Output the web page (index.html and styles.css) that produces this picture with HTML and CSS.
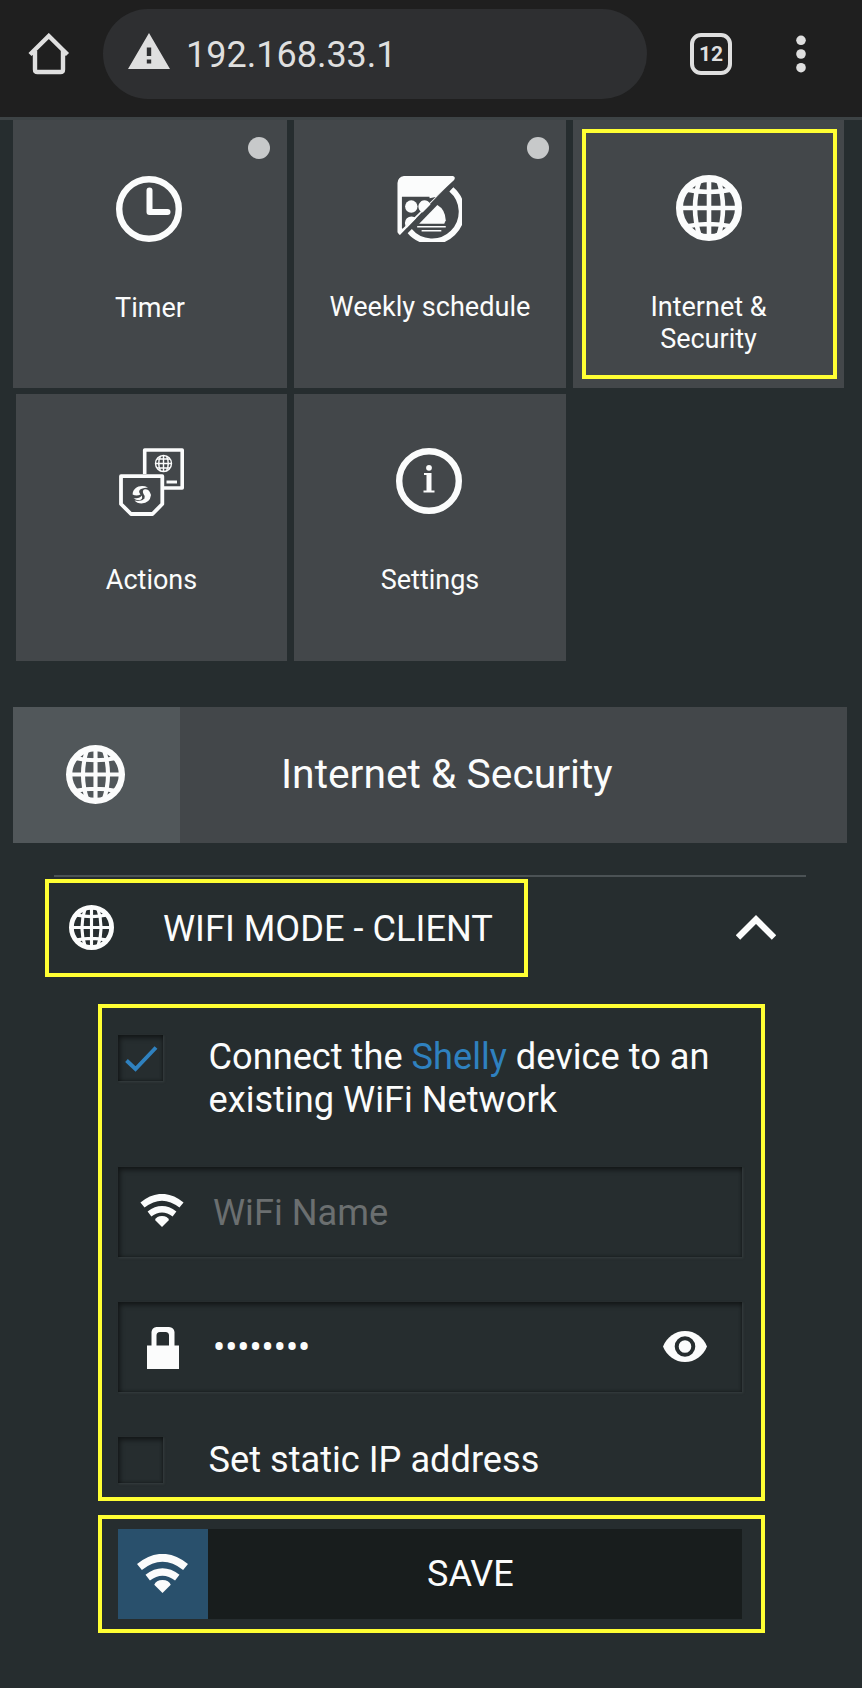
FILE: index.html
```html
<!DOCTYPE html>
<html lang="en">
<head>
<meta charset="utf-8">
<title>Internet &amp; Security</title>
<link rel="stylesheet" href="styles.css">
</head>
<body>
<svg class="defs" aria-hidden="true">
  <symbol id="globe" viewBox="0 0 66 66">
    <g fill="none" stroke="currentColor" stroke-width="4.600">
      <circle cx="33" cy="33" r="29.500" stroke-width="7"/>
      <path d="M33 3v60M3 33h60M10 14.500Q33 19.500 56 14.500M10 51.500Q33 46.500 56 51.500"/>
      <path d="M24 4Q14 33 24 62M42 4Q52 33 42 62"/>
    </g>
  </symbol>
  <symbol id="wifi" viewBox="0 0 44 33">
    <path d="M2.500 11Q22-4.500 41.500 11" fill="none" stroke="currentColor" stroke-width="6.600"/>
    <path d="M9.500 20Q22 10.500 34.500 20" fill="none" stroke="currentColor" stroke-width="6.200"/>
    <path d="M15 26Q16.500 22 22 22T29 26L22 33z" fill="currentColor"/>
  </symbol>
</svg>

<header class="browser">
  <svg class="home" viewBox="0 0 42 42"><path d="M2 21.500 20.800 3 39.500 21.500M7 18v18.500q0 2.500 2.500 2.500h23q2.500 0 2.500-2.500V18" fill="none" stroke="currentColor" stroke-width="4.400"/></svg>
  <div class="address">
    <svg class="warn" viewBox="0 0 42 36"><path d="M21 0 42 36H0zM18.800 14.500v8.500h4.400v-8.500zM18.800 26.500v4h4.400v-4z" fill="currentColor" fill-rule="evenodd"/></svg>
    <span>192.168.33.1</span>
  </div>
  <div class="tabs">12</div>
  <svg class="menu" viewBox="0 0 10 38"><g fill="currentColor"><circle cx="5" cy="5.300" r="4.800"/><circle cx="5" cy="19" r="4.800"/><circle cx="5" cy="32.700" r="4.800"/></g></svg>
</header>

<main>
  <nav class="tiles">
    <div class="row">
      <div class="tile timer">
        <i class="dot"></i>
        <svg class="icon" viewBox="0 0 66 66" fill="none" stroke="currentColor"><circle cx="33" cy="33" r="29.800" stroke-width="6.400"/><path d="M33.500 14.500V36H51.500" stroke-width="6" stroke-linecap="round" stroke-linejoin="round"/></svg>
        <span class="label">Timer</span>
      </div>
      <div class="tile weekly">
        <i class="dot"></i>
        <svg class="icon" viewBox="0 0 67 67">
          <g fill="currentColor">
            <path d="M8 0H57.500Q61 1 59 4L40.500 21H6V53L8 54.500 3.500 60 1.500 57V7Q2 1 8 0z"/>
            <path d="M40.500 21 60 2 4 60 4 56z"/>
            <circle cx="15.500" cy="31" r="6.300"/>
            <path d="M27 37a6.300 6.300 0 1 1 8-8z"/>
            <path d="M11 52.500a6.300 6.300 0 1 1 9.500-9.500z"/>
            <path d="M23.500 48.500 42 29.500Q50 34 50.500 45L49 48.500z"/>
          </g>
          <path d="M56 13.500A30 30 0 1 1 13.500 55.500" fill="none" stroke="currentColor" stroke-width="6"/>
          <path d="M21.500 51.500h29M26 55.500h20" stroke="currentColor" stroke-width="1.500"/>
          <path d="M6.500 61.500 63 4.500" stroke="#43474a" stroke-width="2.800"/>
          <path d="M34 21.500 41 20" stroke="currentColor" stroke-width="2"/>
        </svg>
        <span class="label">Weekly schedule</span>
      </div>
      <div class="tile internet">
        <div class="mark"></div>
        <svg class="icon"><use href="#globe"/></svg>
        <span class="label">Internet &amp;<br>Security</span>
      </div>
    </div>
    <div class="row second">
      <div class="tile actions">
        <svg class="icon" viewBox="0 0 66 68" fill="none" stroke="currentColor">
          <path d="M25.700 26V2H63.200V40H45" stroke-width="3.600" stroke-linejoin="round"/>
          <path d="M2 28.200H43.300V56L33.500 66H12L2 56z" stroke-width="3.800" stroke-linejoin="round"/>
          <path d="M47.500 34h10.500" stroke-width="3"/>
          <g stroke-width="1.400"><circle cx="44.500" cy="15.500" r="8"/><path d="M44.500 7.500v16M36.500 15.500h16M38 11h13M38 20h13M41.500 8Q38 15.500 41.500 23M47.500 8Q51 15.500 47.500 23"/></g>
          <g fill="currentColor" stroke="none"><path d="M29 39.500C22 36 14 39 13.600 46.500Q17.500 48.500 21.500 46.500 18.500 43 22 41 25 39.500 29 39.500z"/><path d="M25 41.500Q29 40.500 31 44.500L32 47Q31 55 22.500 55.500 18 55.500 15.500 52.500 23 54 25.500 50.500 26.500 48 24.500 46 23 43 25 41.500z"/><path d="M14.500 50Q21 51 22.500 47.500 24.500 51 20.500 52.300 17 52.500 14.500 50z"/></g>
        </svg>
        <span class="label">Actions</span>
      </div>
      <div class="tile settings">
        <svg class="icon" viewBox="0 0 66 66"><circle cx="33" cy="33" r="29.800" fill="none" stroke="currentColor" stroke-width="6.400"/><circle cx="33" cy="19.800" r="2.900" fill="currentColor"/><path d="M28 25h7.500v17.500h3V44.500H27.500v-2h3V27H28z" fill="currentColor"/></svg>
        <span class="label">Settings</span>
      </div>
    </div>
  </nav>

  <section class="title">
    <div class="title-icon"><svg><use href="#globe"/></svg></div>
    <h1>Internet &amp; Security</h1>
  </section>

  <hr>

  <div class="mode">
    <div class="mode-name">
      <svg class="mode-icon"><use href="#globe"/></svg>
      <h2>WIFI MODE - CLIENT</h2>
    </div>
    <svg class="chevron" viewBox="0 0 40 25"><path d="M2 22.500 20 4.500 38 22.500" fill="none" stroke="currentColor" stroke-width="6.200"/></svg>
  </div>

  <form class="client">
    <div class="check">
      <div class="box"><svg viewBox="0 0 45 46"><path d="M8.500 25.500 17.500 34 38 12.500" fill="none" stroke="#2f81bf" stroke-width="3.900"/></svg></div>
      <p>Connect the <b>Shelly</b> device to an<br>existing WiFi Network</p>
    </div>
    <div class="field name">
      <svg class="wifi"><use href="#wifi"/></svg>
      <span class="placeholder">WiFi Name</span>
    </div>
    <div class="field password">
      <svg class="lock" viewBox="0 0 32 42"><path d="M0 18.500H4.500V5Q5 .5 9.500 0H22Q27 .5 27.500 5V18.500H32V42H0zM9.500 18.500H22V8.500Q22 5 18.500 5H13Q9.500 5 9.500 8.500z" fill="currentColor" fill-rule="evenodd"/></svg>
      <span class="dots">••••••••</span>
      <svg class="eye" viewBox="0 0 44 31"><path d="M0 15.500C4 6 12 0 22 0S40 6 44 15.500C40 25 32 31 22 31S4 25 0 15.500z" fill="currentColor"/><circle cx="22" cy="15.500" r="8.300" fill="none" stroke="#262d2f" stroke-width="4"/></svg>
    </div>
    <div class="check static">
      <div class="box"></div>
      <p>Set static IP address</p>
    </div>
  </form>

  <div class="submit">
    <div class="save">
      <div class="save-icon"><svg><use href="#wifi"/></svg></div>
      <span>SAVE</span>
    </div>
  </div>
</main>
</body>
</html>
```

FILE: styles.css
```css
* { box-sizing: border-box; }
body {
  margin: 0;
  width: 862px;
  height: 1688px;
  overflow: hidden;
  background: #262d2f;
  color: #fbfcfc;
  font-family: Roboto, sans-serif;
}
svg { display: block; flex: none; }
.defs { position: absolute; width: 0; height: 0; }
h1, h2, p { margin: 0; font-weight: 400; }

.browser {
  display: flex;
  height: 120px;
  background: #1f1f1f;
  border-bottom: 3px solid #3d4345;
  color: #dfdfdf;
}
.home { width: 42px; height: 42px; margin: 33px 0 0 28px; }
.address {
  display: flex;
  width: 544px;
  height: 90px;
  margin: 9px 0 0 33px;
  padding: 0 0 0 25px;
  border-radius: 45px;
  background: #2e2f31;
}
.warn { width: 42px; height: 36px; margin-top: 24px; }
.address span { margin: 25px 0 0 16px; font-size: 36px; line-height: 43px; }
.tabs {
  width: 42px;
  height: 42px;
  margin: 33px 0 0 43px;
  border: 4.500px solid #dfdfdf;
  border-radius: 11px;
  font: 700 21px/35px Roboto, sans-serif;
  text-align: center;
}
.menu { width: 10px; height: 38px; margin: 34.500px 0 0 64px; }

.tiles { display: grid; gap: 6px; padding-left: 13px; }
.row { display: flex; gap: 7px; }
.second { padding-left: 3px; }
.tile {
  position: relative;
  display: flex;
  flex-direction: column;
  align-items: center;
  width: 272px;
  height: 268px;
  padding-top: 56px;
  background: #43474a;
}
.timer { width: 274px; }
.internet { width: 271px; }
.second .tile { height: 267px; padding-top: 54px; }
.second .actions { width: 271px; }
.icon { width: 66px; height: 66px; }
.timer .icon, .weekly .icon, .settings .icon { margin-left: -2px; }
.internet .icon { margin: -1px 0 1px; }
.actions .icon { height: 68px; margin-bottom: -2px; }
.label { margin-top: 50px; font-size: 27px; line-height: 31.500px; text-align: center; }
.timer .label { margin-top: 51px; }
.weekly .label { font-size: 27.100px; }
.second .label { margin-top: 51px; }
.dot {
  position: absolute;
  top: 17px;
  right: 17px;
  width: 22px;
  height: 22px;
  border-radius: 50%;
  background: #c7c9ca;
}
.mark {
  position: absolute;
  inset: 9px 7px 9px 9px;
  border: 4px solid #ffff33;
}

.title {
  display: flex;
  width: 834px;
  height: 136px;
  margin: 46px 0 0 13px;
  background: #43474a;
}
.title-icon { width: 167px; padding: 38px 0 0 53px; background: #51575a; }
.title-icon svg { width: 59px; height: 59px; }
.title h1 { margin: 43px 0 0 101px; font-size: 40.800px; line-height: 48px; }

hr { width: 752px; height: 2px; margin: 32px 0 2px 54px; border: 0; background: #4b5255; }

.mode { display: flex; margin-left: 45px; }
.mode-name {
  display: flex;
  width: 483px;
  height: 98px;
  border: 4px solid #ffff33;
  padding: 22px 0 0 20px;
}
.mode-icon { width: 45px; height: 45px; }
.mode h2 { margin: 2px 0 0 49px; font-size: 36.200px; line-height: 43px; white-space: nowrap; }
.chevron { width: 40px; height: 25px; margin: 36px 0 0 208px; }

.client, .submit { width: 667px; margin-left: 98px; border: 4px solid #ffff33; }
.client { height: 497px; margin-top: 27px; padding: 27px 0 0 16px; font-size: 36px; line-height: 43px; }
.check { display: flex; gap: 45.500px; }
.check p { font-size: 36.200px; white-space: nowrap; }
.check b { color: #2f81bf; font-weight: 400; }
.box, .field {
  box-shadow: inset 2px 3px 5px rgba(0, 0, 0, .5), inset -1px -1px 3px rgba(0, 0, 0, .25), 1px 1px 2px #363c3e;
}
.box { width: 45px; height: 46px; }
.field { display: flex; width: 624px; height: 90px; }
.name { margin-top: 46px; padding: 27px 0 0 22px; }
.wifi { width: 44px; height: 33px; }
.placeholder { margin: -3px 0 0 29px; color: #6b6f70; font-size: 36.200px; }
.password { margin-top: 45px; padding: 25px 0 0 29px; }
.lock { width: 32px; height: 42px; }
.dots { width: 413px; margin: 0 0 0 34px; }
.eye { width: 44px; height: 31px; margin: 4px 0 0 37px; }
.static { margin-top: 45px; }
.static p { margin-top: 1px; }

.submit { height: 118px; margin-top: 14px; padding: 10px 0 0 16px; }
.save { display: flex; width: 624px; height: 90px; background: #181d1d; }
.save-icon { width: 90px; padding: 25px 0 0 18px; background: #29506c; }
.save-icon svg { width: 53px; height: 39px; }
.save span { margin: 24px 0 0 219px; font-size: 36px; line-height: 43px; }
```
